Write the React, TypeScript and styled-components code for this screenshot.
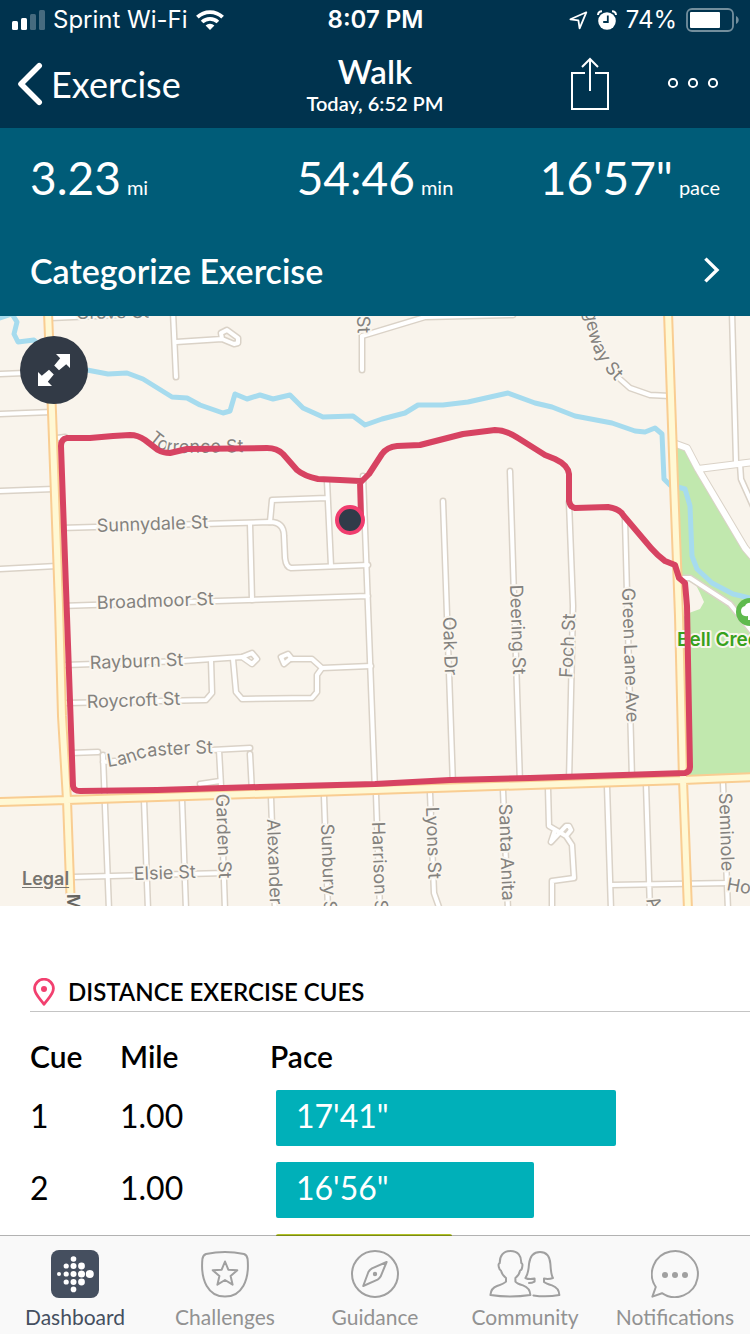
import React from 'react';
import styled, { createGlobalStyle } from 'styled-components';

const GlobalStyle = createGlobalStyle`
  *, *::before, *::after { box-sizing: border-box; }
  body {
    margin: 0;
    font-family: Lato, "Open Sans", sans-serif;
    color: #000;
    background: #fff;
  }
  button { font: inherit; color: inherit; background: none; border: 0; padding: 0; cursor: pointer; }
  a { color: inherit; text-decoration: none; }
  svg { display: block; flex: none; }
`;

const Screen = styled.div`
  display: flex;
  flex-direction: column;
  height: 100vh;
`;

const TopBar = styled.header`
  background: #00334e;
  color: #fff;
`;

const StatusBar = styled.div`
  display: grid;
  grid-template-columns: 1fr auto 1fr;
  align-items: center;
  height: 40px;
  padding: 0 11px 0 12px;
  font-family: Inter, sans-serif;
  font-size: 24px;
  line-height: 28px;
`;

const StatusGroup = styled.div<{ $end?: boolean; $gap: number }>`
  display: flex;
  align-items: center;
  justify-content: ${(p) => (p.$end ? 'flex-end' : 'flex-start')};
  gap: ${(p) => p.$gap}px;
`;

const Clock = styled.time`
  font-weight: 600;
`;

const NavBar = styled.nav`
  display: grid;
  grid-template-columns: 1fr auto 1fr;
  align-items: center;
  height: 88px;
  padding: 0 17px;
`;

const BackLink = styled.a`
  display: flex;
  align-items: center;
  gap: 8px;
  font-size: 36px;
  line-height: 44px;
`;

const TitleBlock = styled.div`
  padding-bottom: 2px;
  text-align: center;
`;

const Title = styled.h1`
  margin: 0;
  font-size: 33px;
  line-height: 40px;
  font-weight: 600;
`;

const Subtitle = styled.p`
  margin: 0;
  font-size: 20px;
  line-height: 24px;
  font-weight: 600;
`;

const NavActions = styled.div`
  display: flex;
  align-items: center;
  justify-content: flex-end;
  gap: 58px;
  padding-right: 14px;
`;

const Content = styled.main`
  flex: 1;
  min-height: 0;
  overflow-y: auto;
  scrollbar-width: none;
`;

const Summary = styled.section`
  background: #005c78;
  color: #fff;
  padding: 20px 30px 0;
`;

const Stats = styled.div`
  display: grid;
  grid-template-columns: 1fr auto 1fr;
`;

const Stat = styled.div<{ $align?: 'left' | 'right' }>`
  display: flex;
  align-items: baseline;
  justify-content: ${(p) => (p.$align === 'right' ? 'flex-end' : 'flex-start')};
  gap: 6px;
`;

const StatValue = styled.span`
  font-size: 46px;
  line-height: 60px;
`;

const StatUnit = styled.span`
  font-size: 20px;
  line-height: 24px;
`;

const CategorizeButton = styled.button`
  display: flex;
  align-items: center;
  justify-content: space-between;
  width: 100%;
  height: 92px;
  margin-top: 16px;
  font-size: 34px;
  font-weight: 600;
  text-align: left;
`;

const MapPanel = styled.section`
  position: relative;
  overflow: hidden;
`;

const MapDrawing = styled.svg`
  width: 100%;
  height: auto;
`;

const ExpandButton = styled.button`
  position: absolute;
  top: 20px;
  left: 20px;
  width: 68px;
  height: 68px;
  border-radius: 50%;
  background: #323a46;
  display: flex;
  align-items: center;
  justify-content: center;
`;

const LegalLink = styled.a`
  position: absolute;
  left: 22px;
  bottom: 16px;
  font-family: Inter, sans-serif;
  font-size: 18px;
  line-height: 22px;
  font-weight: 600;
  color: #77746f;
  text-decoration: underline;
  text-underline-offset: 2px;
`;

const Cues = styled.section`
  padding: 68px 0 0 30px;
`;

const CuesHeading = styled.h2`
  display: flex;
  align-items: center;
  gap: 12px;
  height: 38px;
  margin: 0;
  padding-bottom: 2px;
  border-bottom: 1px solid #c4c4c4;
  font-size: 24px;
  line-height: 28px;
  font-weight: 600;
`;

const CueTable = styled.table`
  width: calc(100% - 30px);
  margin-top: 20px;
  border-collapse: collapse;
  table-layout: fixed;
`;

const CueHead = styled.th<{ $width?: number }>`
  width: ${(p) => (p.$width ? p.$width + 'px' : 'auto')};
  height: 50px;
  padding: 0 0 2px;
  text-align: left;
  font-size: 30px;
  line-height: 36px;
  font-weight: 600;
`;

const CueCell = styled.td`
  height: 72px;
  padding: 0 0 4px;
  font-size: 32px;
  line-height: 40px;
`;

const PaceCell = styled(CueCell)`
  padding: 0 0 0 6px;
`;

const PaceBar = styled.div<{ $color: string }>`
  display: flex;
  align-items: center;
  height: 56px;
  padding: 0 0 4px 20px;
  border-radius: 2px;
  background: ${(p) => p.$color};
  color: #fff;
`;

const TabBar = styled.nav`
  position: relative;
  display: grid;
  grid-template-columns: repeat(5, 1fr);
  height: 99px;
  margin-top: -1px;
  border-top: 1px solid rgba(0, 0, 0, 0.3);
  background: #f9f9f9 padding-box;
`;

const Tab = styled.a<{ $active?: boolean }>`
  display: flex;
  flex-direction: column;
  align-items: center;
  gap: 7px;
  padding-top: 14px;
  font-size: 21px;
  line-height: 24px;
  color: ${(p) => (p.$active ? '#454f5f' : '#929292')};
`;

const SignalIcon = () => (
  <svg width="33" height="20" viewBox="0 0 33 20" fill="#fff" aria-hidden="true">
    <rect x="0" y="11" width="6" height="9" rx="1.5" />
    <rect x="9" y="8" width="6" height="12" rx="1.5" />
    <rect x="18" y="4" width="6" height="16" rx="1.5" opacity="0.28" />
    <rect x="27" y="0" width="6" height="20" rx="1.5" opacity="0.28" />
  </svg>
);

const WifiIcon = () => (
  <svg width="28" height="20" viewBox="0 0 28 20" fill="none" stroke="#fff" strokeWidth="3.8" aria-hidden="true">
    <path d="M1.4 7.2A18 18 0 0 1 26.6 7.2" />
    <path d="M6.1 12A11.4 11.4 0 0 1 21.9 12" />
    <path d="M14 20L9.6 15.4A6.4 6.4 0 0 1 18.4 15.4Z" fill="#fff" stroke="none" />
  </svg>
);

const LocationIcon = () => (
  <svg width="19" height="19" viewBox="0 0 19 19" fill="none" stroke="#fff" strokeWidth="1.8" strokeLinejoin="round" aria-hidden="true">
    <path d="M17.3 1.3L1.4 8.3L9.4 9.3L10.6 17.3Z" />
  </svg>
);

const AlarmIcon = () => (
  <svg width="20" height="20" viewBox="0 0 20 20" aria-hidden="true">
    <circle cx="10" cy="11" r="8.8" fill="#fff" />
    <path d="M1 5A4 4 0 0 1 5 1.3M19 5A4 4 0 0 0 15 1.3" stroke="#fff" strokeWidth="2" fill="none" />
    <path d="M10.8 5.5V12H6.2" stroke="#00334e" strokeWidth="1.8" fill="none" />
  </svg>
);

const BatteryIcon = () => (
  <svg width="53" height="24" viewBox="0 0 53 24" aria-hidden="true">
    <rect x="1" y="1" width="46" height="22" rx="5" fill="none" stroke="#fff" strokeOpacity="0.45" strokeWidth="1.8" />
    <rect x="4" y="4" width="30" height="16" rx="1" fill="#fff" />
    <path d="M50 8C53.6 9.4 53.6 14.6 50 16Z" fill="#fff" opacity="0.45" />
  </svg>
);

const BackIcon = () => (
  <svg width="26" height="44" viewBox="0 0 26 44" fill="none" stroke="#fff" strokeWidth="5.6" strokeLinecap="round" strokeLinejoin="round" aria-hidden="true">
    <path d="M22.2 3.8L4 22L22.2 40.2" />
  </svg>
);

const ShareIcon = () => (
  <svg width="38" height="54" viewBox="0 0 38 54" fill="none" stroke="#fff" strokeWidth="2" aria-hidden="true">
    <path d="M14 16H1V52H37V16H24" />
    <path d="M19 34V2M11 10L19 2L27 10" />
  </svg>
);

const MoreIcon = () => (
  <svg width="52" height="12" viewBox="0 0 52 12" fill="none" stroke="#fff" strokeWidth="2" aria-hidden="true">
    <circle cx="6" cy="5" r="4.1" />
    <circle cx="26" cy="5" r="4.1" />
    <circle cx="46" cy="5" r="4.1" />
  </svg>
);

const ChevronIcon = () => (
  <svg width="17" height="26" viewBox="0 0 17 26" fill="none" stroke="#fff" strokeWidth="3.4" aria-hidden="true">
    <path d="M2.4 1.6L14 13L2.4 24.4" />
  </svg>
);

const ExpandIcon = () => (
  <svg width="32" height="32" viewBox="0 0 32 32" fill="#fff" aria-hidden="true">
    <path d="M18 0H32V14L28.2 10.2L21 16.2L16.2 11.4L22.2 4.2Z" />
    <path d="M14 32H0V18L3.8 21.8L11 15.8L15.8 20.6L9.8 27.8Z" />
  </svg>
);

const PinIcon = () => (
  <svg width="26" height="28" viewBox="0 0 26 28" aria-hidden="true">
    <path d="M14 26.4C11 21.4 4.6 16.8 4.6 10.6A9.4 9.4 0 0 1 23.4 10.6C23.4 16.8 17 21.4 14 26.4Z" fill="none" stroke="#f2406f" strokeWidth="2.8" strokeLinejoin="round" />
    <circle cx="14" cy="11" r="3" fill="#f2406f" />
  </svg>
);

const DashboardIcon = () => (
  <svg width="48" height="48" viewBox="0 0 48 48" aria-hidden="true">
    <rect width="48" height="48" rx="8" fill="#454f5f" />
    <g fill="#fff">
      <circle cx="8" cy="24" r="2" />
      <circle cx="15.2" cy="16" r="2.6" /><circle cx="15.2" cy="24" r="2.6" /><circle cx="15.2" cy="32" r="2.6" />
      <circle cx="22.5" cy="9" r="2.8" /><circle cx="22.5" cy="16" r="3" /><circle cx="22.5" cy="24" r="3" />
      <circle cx="22.5" cy="32" r="3" /><circle cx="22.5" cy="39.4" r="2.8" />
      <circle cx="30.5" cy="16" r="3.4" /><circle cx="30.5" cy="24" r="3.5" /><circle cx="30.5" cy="32" r="3.4" />
      <circle cx="38.8" cy="24" r="4" />
    </g>
  </svg>
);

const LineIcon = ({ width = 48, children }: { width?: number; children: React.ReactNode }) => (
  <svg width={width} height="48" viewBox={`0 0 ${width} 48`} fill="none" stroke="#a0a0a0" strokeWidth="2" strokeLinejoin="round" strokeLinecap="round" aria-hidden="true">
    {children}
  </svg>
);

const ChallengesIcon = () => (
  <LineIcon>
    <path d="M5 4Q24 0 43 4Q46 5 46.6 9C48.6 30 41 46.6 24 46.6C7 46.6-.6 30 1.4 9Q2 5 5 4Z" />
    <path d="M24 11.5L27.3 19.7L36.3 20.2L29.6 26L31.6 34.7L24 30L16.4 34.7L18.4 26L11.7 20.2L20.7 19.7Z" />
  </LineIcon>
);

const GuidanceIcon = () => (
  <LineIcon>
    <circle cx="24" cy="24" r="23" />
    <path d="M35.6 12L21 18.4Q18.6 19.8 17.4 22L12.2 36L26.6 29.6Q28.4 28.6 29.6 26.6Z" />
    <circle cx="24" cy="24" r="1.2" fill="#a0a0a0" />
  </LineIcon>
);

const CommunityIcon = () => (
  <LineIcon width={72}>
    <path d="M21.5 1C14 1 10.6 6 10.8 13Q9 13.4 9.8 17Q10.4 20 12 20.6Q13 25 17 28V31.6Q15 33.6 8 36Q2 38 1.4 45Q21 48 41.4 45Q41 38 34 35.4Q28 33.6 26.4 31.6V28Q30.4 25 31 20.6Q32.8 20 33.2 17Q34 13.4 32.2 13C32.6 6 29 1 21.5 1Z" />
    <path d="M44.4 45.4Q57 47.4 70.4 45Q70 38 63 35.4Q57 33.6 55 32V28.6Q60 29.4 64 28Q62 25 61.4 14C60.8 6 57 2 51 2S41 6 40 14C39.6 21 38.6 25 36.4 28Q40 29.8 45.6 28.6V31.6Q43 33 40 33" />
  </LineIcon>
);

const NotificationsIcon = () => (
  <LineIcon>
    <path d="M4.8 37A23 23 0 1 1 11 43.2L1.4 46.6Z" />
    <g fill="#a0a0a0" stroke="none">
      <circle cx="14" cy="25" r="3" />
      <circle cx="24" cy="25" r="3" />
      <circle cx="34" cy="25" r="3" />
    </g>
  </LineIcon>
);

const streets = [
  'M0 58L50 56M0 98L52 96M0 175L54 173M0 253L57 250',
  'M50 2L120 -1M173 -4L176 61M176 26L222 23M222 23L221 17L227 14L238 22L238 27L234 28L222 23',
  'M362 54V20M362 20L425 1L513 -1',
  'M57 122L65 121',
  'M60 212L270 206Q284 206 284 220L285 242Q286 251 291 252L368 249',
  'M250 208L252 284M270 206L272 184L327 182M327 165L331 250',
  'M60 290L368 280M363 160L375 475',
  'M65 349L183 345L242 341L252 337L257 343L252 348L242 341',
  'M211 344L212 377L206 384L67 387',
  'M233 343L236 376L242 383L312 382L317 376V359L322 352L371 350M322 352L312 343L290 343L284 348L281 341L288 338L292 343',
  'M70 437L98 436M103 439L109 594M103 446L115 445M212 434L250 432M219 434L221 470M200 468L220 465M250 438L252 476',
  'M144 484L148 594M182 483L186 594M221 477L225 594M271 481L275 594M324 480L328 594M376 478L380 594M73 561L225 557',
  'M443 185L453 470M510 155L520 468M569 186L573 290L569 465M625 203L632 463',
  'M430 477L434 577L440 594M503 474L508 594',
  'M548 472L549 510L566 520L572 529L574 562L552 565V594M566 520L571 514L569 510H566L551 526L555 514',
  'M607 470L611 594M646 468L650 594M611 569L730 567M723 467L728 594',
  'M732 -4L736 146M740 148L741 163L754 192M612 56L630 72L650 79L670 80',
  'M683 262H690L730 288L754 318',
];

const avenues = 'M676 128L687 132L698 153L745 232L756 245M698 153L754 146';
const highways = 'M48 -4L52 96L59 290L62 400L67 484L71 594M-4 486L67 484L375 474L683 464L754 461M668 -4L674 167L679 300L683 464L688 594';

const MapLabel = styled.text`
  font-family: Inter, sans-serif;
  font-size: 18px;
  fill: #84827e;
  stroke: #faf6ef;
  stroke-width: 4px;
  stroke-linejoin: round;
  paint-order: stroke;
`;

const BoldLabel = styled(MapLabel)`
  font-weight: 600;
  fill: #66645f;
`;

const ParkLabel = styled(MapLabel)`
  font-size: 19px;
  font-weight: 600;
  fill: #38a11c;
`;

const labels: Array<[string, number, number, number]> = [
  ['Grove St', 76, 3, -1],
  ['Sunnydale St', 97, 216, -2],
  ['Broadmoor St', 97, 293, -2],
  ['Rayburn St', 90, 353, -2],
  ['Roycroft St', 87, 392, -2],
  ['Elsie St', 134, 564, -2],
  ['Garden St', 216, 478, 88],
  ['Alexander', 267, 503, 88],
  ['Sunbury St', 321, 508, 88],
  ['Harrison St', 372, 506, 88],
  ['Lyons St', 426, 491, 88],
  ['Santa Anita', 499, 488, 88],
  ['Seminole', 719, 477, 88],
  ['Oak Dr', 443, 301, 88],
  ['Deering St', 510, 269, 88],
  ['Foch St', 572, 362, -87],
  ['Green Lane Ave', 622, 272, 88],
  ['St', 357, 0, 88],
  ['Ave', 646, 584, 65],
  ['Howard', 726, 574, 10],
];

const RouteMap = () => (
  <MapDrawing viewBox="0 0 750 590" role="img" aria-label="Route of the walk">
    <rect width="750" height="590" fill="#f9f4ec" />
    <path d="M676 131L687 134L698 155L750 240V461L684 463L679 300Z" fill="#c1e8ae" />
    <path d="M682 262L694 265L700 277L704 286L700 293L689 297L682 302Z" fill="#f9f4ec" />
    <g fill="none" strokeLinejoin="round" strokeLinecap="round">
      <g stroke="#dad2c7" strokeWidth="7">
        {streets.map((d) => <path key={d} d={d} />)}
        <path d={avenues} strokeWidth="8" />
      </g>
      <path
        d="M0 2L12 -2L17 6L14 18L18 26L34 24L60 48L87 54L108 58L127 57L143 63L172 81L187 82L200 89L223 97L230 95L235 78L247 83L260 79L273 83L290 79L303 92L323 101L353 100L365 109L382 103L405 97L418 89L443 89L468 86L508 77L535 87L552 91L575 100L612 107L635 115L645 116L655 112L662 118L664 163L670 169L685 173L690 190L692 240L697 253L712 267L733 278L750 282"
        stroke="#a6dbee"
        strokeWidth="5"
      />
      <g stroke="#fff" strokeWidth="4">
        {streets.map((d) => <path key={d} d={d} />)}
        <path d={avenues} strokeWidth="6" />
      </g>
      <path d={highways} stroke="#f9cd92" strokeWidth="10" />
      <path d={highways} stroke="#fff8d4" strokeWidth="6" />
    </g>
    {labels.map(([name, x, y, angle]) => (
      <MapLabel key={name} transform={`translate(${x} ${y}) rotate(${angle})`}>{name}</MapLabel>
    ))}
    <defs>
      <path id="torrence" d="M148 124L157 131Q165 137 178 137L262 136" />
      <path id="lancaster" d="M108 451L126 448L146 441Q165 438 230 437" />
      <path id="ridgeway" d="M583 -32C585 20 592 45 624 73" />
    </defs>
    <MapLabel><textPath href="#torrence">Torrence St</textPath></MapLabel>
    <MapLabel><textPath href="#lancaster">Lancaster St</textPath></MapLabel>
    <MapLabel><textPath href="#ridgeway">Ridgeway St</textPath></MapLabel>
    <BoldLabel transform="translate(67 578) rotate(89)">Middlebelt</BoldLabel>
    <ParkLabel x="677" y="330">Bell Creek</ParkLabel>
    <circle cx="750" cy="296" r="14" fill="#5fba4d" />
    <path d="M748 304V300Q741 301 741 295Q741 291 745 290Q747 286 752 287L758 292V300H752V304Z" fill="#fff" />
    <path
      d="M361 200L360 165L340 164L318 163Q304 160 297 154L283 138Q277 132 267 132L187 133L170 137Q163 137 158 134L145 124Q138 119 130 119L113 120L90 122L67 122Q61 123 61 130L63 187L67 300L73 470Q74 475 80 475L157 474L260 471L375 468L450 464L530 462L685 457Q690 456 690 451L687 290L685 267L679 262L675 249L665 245Q658 240 651 232L623 199Q620 193 608 191L575 192Q570 191 569 185L569 158Q568 149 555 143L545 139L518 122Q506 114 495 114L463 118L420 129L397 130Q387 131 382 138L369 158L361 166"
      fill="none"
      stroke="#d74362"
      strokeWidth="6"
      strokeLinejoin="round"
    />
    <circle cx="350" cy="204" r="13" fill="#303b49" stroke="#f03d6e" strokeWidth="4" />
  </MapDrawing>
);

const cues = [
  { cue: 1, mile: '1.00', pace: `17'41"`, share: 76.6, color: '#00b0b9' },
  { cue: 2, mile: '1.00', pace: `16'56"`, share: 58.1, color: '#00b0b9' },
  { cue: 3, mile: '1.00', pace: `16'11"`, share: 39.6, color: '#b1c326' },
];

const tabs = [
  { name: 'Dashboard', Icon: DashboardIcon },
  { name: 'Challenges', Icon: ChallengesIcon },
  { name: 'Guidance', Icon: GuidanceIcon },
  { name: 'Community', Icon: CommunityIcon },
  { name: 'Notifications', Icon: NotificationsIcon },
];

export default function App() {
  return (
    <Screen>
      <GlobalStyle />
      <TopBar>
        <StatusBar>
          <StatusGroup $gap={8}>
            <SignalIcon />
            <span>Sprint Wi-Fi</span>
            <WifiIcon />
          </StatusGroup>
          <Clock>8:07 PM</Clock>
          <StatusGroup $gap={9} $end>
            <LocationIcon />
            <AlarmIcon />
            <span>74%</span>
            <BatteryIcon />
          </StatusGroup>
        </StatusBar>
        <NavBar>
          <BackLink href="#exercise"><BackIcon />Exercise</BackLink>
          <TitleBlock>
            <Title>Walk</Title>
            <Subtitle>Today, 6:52 PM</Subtitle>
          </TitleBlock>
          <NavActions>
            <button aria-label="Share"><ShareIcon /></button>
            <button aria-label="More"><MoreIcon /></button>
          </NavActions>
        </NavBar>
      </TopBar>
      <Content>
        <Summary>
          <Stats>
            <Stat><StatValue>3.23</StatValue><StatUnit>mi</StatUnit></Stat>
            <Stat><StatValue>54:46</StatValue><StatUnit>min</StatUnit></Stat>
            <Stat $align="right"><StatValue>16'57"</StatValue><StatUnit>pace</StatUnit></Stat>
          </Stats>
          <CategorizeButton>Categorize Exercise<ChevronIcon /></CategorizeButton>
        </Summary>
        <MapPanel>
          <RouteMap />
          <ExpandButton aria-label="Expand map"><ExpandIcon /></ExpandButton>
          <LegalLink href="#legal">Legal</LegalLink>
        </MapPanel>
        <Cues>
          <CuesHeading><PinIcon />DISTANCE EXERCISE CUES</CuesHeading>
          <CueTable>
            <thead>
              <tr>
                <CueHead $width={90}>Cue</CueHead>
                <CueHead $width={150}>Mile</CueHead>
                <CueHead>Pace</CueHead>
              </tr>
            </thead>
            <tbody>
              {cues.map(({ cue, mile, pace, share, color }) => (
                <tr key={cue}>
                  <CueCell>{cue}</CueCell>
                  <CueCell>{mile}</CueCell>
                  <PaceCell>
                    <PaceBar $color={color} style={{ width: `${share}%` }}>{pace}</PaceBar>
                  </PaceCell>
                </tr>
              ))}
            </tbody>
          </CueTable>
        </Cues>
      </Content>
      <TabBar>
        {tabs.map(({ name, Icon }, i) => (
          <Tab key={name} href={`#${name.toLowerCase()}`} $active={i === 0}>
            <Icon />
            {name}
          </Tab>
        ))}
      </TabBar>
    </Screen>
  );
}
